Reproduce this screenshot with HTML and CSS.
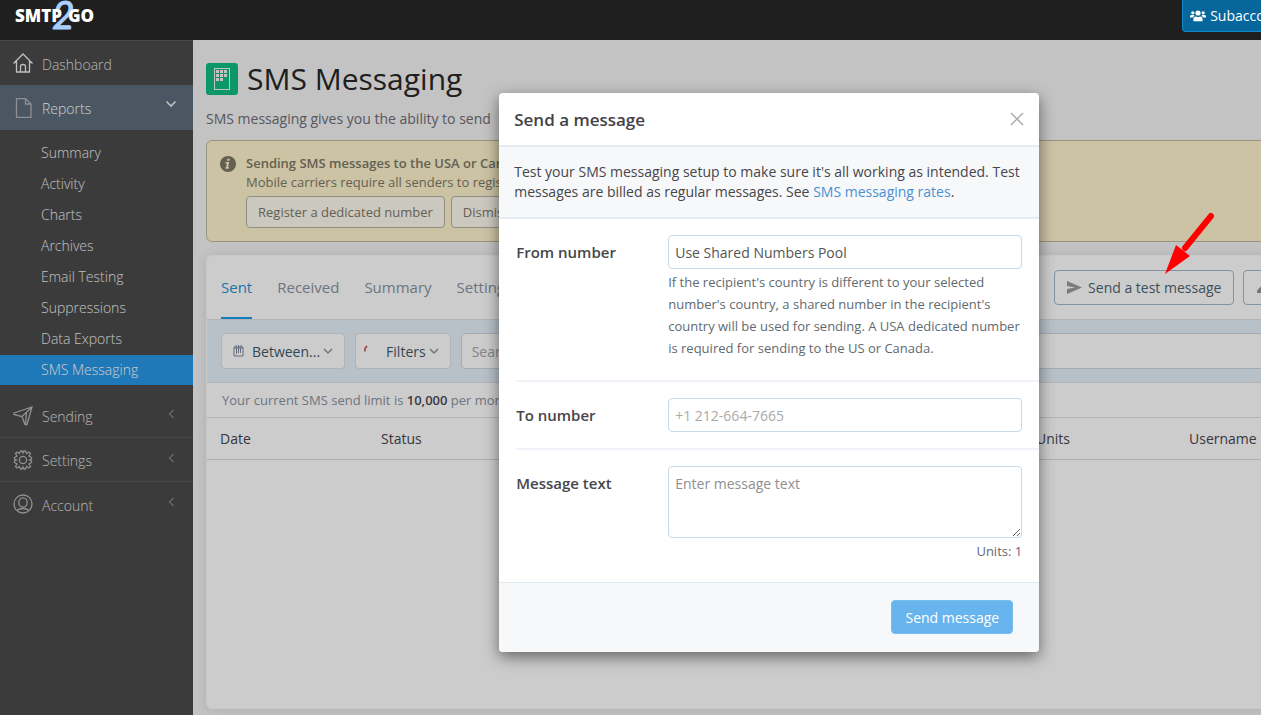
FILE: index.html
```html
<!DOCTYPE html>
<html lang="en">
<head>
    <meta charset="UTF-8">
    <meta name="viewport" content="width=device-width, initial-scale=1.0">
    <title>SMS Messaging</title>
    <link rel="stylesheet" href="styles.css">
</head>
<body>
    <div class="page">
        <header class="topbar">
            <a class="logo" href="#" aria-label="SMTP2GO">
                <svg width="84" height="34" viewBox="0 0 84 34">
                    <text class="logo-two" x="37" y="29">2</text>
                    <text class="logo-word" x="0" y="22">SMTP</text>
                    <text class="logo-word" x="53" y="22">GO</text>
                </svg>
            </a>
            <button type="button" class="subaccounts">
                <svg width="16" height="12" viewBox="0 0 16 12" fill="currentColor">
                    <circle cx="8" cy="3" r="2.6"/><circle cx="2.8" cy="2.8" r="1.6"/><circle cx="13.2" cy="2.8" r="1.6"/>
                    <path d="M3.4 11.3V9.4Q3.4 6.6 6 6.4q2 1 4 0 2.600.2 2.600 3v1.900zM0 7.600V6.400Q0 5 1.600 5h2.200l.8 1Q3 6.600 2.800 7.600zM16 7.600V6.400Q16 5 14.400 5h-2.200l-.8 1q1.600.6 1.800 1.600z"/>
                </svg>
                Subaccounts
            </button>
        </header>

        <div class="layout">
            <nav class="sidebar">
                <a class="nav-item bright" href="#">
                    <svg class="nav-icon" viewBox="0 0 20 20"><path d="M.5 10.500 10 1l9.500 9.500M3.500 8v11h4v-5.500q0-2 2.500-2t2.500 2V19h4V8M7.500 19h5"/></svg>
                    <span>Dashboard</span>
                </a>
                <a class="nav-item open" href="#">
                    <svg class="nav-icon" viewBox="0 0 20 20"><path d="M3.500.5h9l5.500 5.500v13.500H3.500zM12.500.5V6H18"/></svg>
                    <span>Reports</span>
                    <svg class="chevron" width="12" height="12" viewBox="0 0 12 12"><path d="M1.500 3.500 6 8l4.500-4.500"/></svg>
                </a>
                <ul class="subnav">
                    <li><a href="#">Summary</a></li>
                    <li><a href="#">Activity</a></li>
                    <li><a href="#">Charts</a></li>
                    <li><a href="#">Archives</a></li>
                    <li><a href="#">Email Testing</a></li>
                    <li><a href="#">Suppressions</a></li>
                    <li><a href="#">Data Exports</a></li>
                    <li><a class="active" href="#">SMS Messaging</a></li>
                </ul>
                <a class="nav-item" href="#">
                    <svg class="nav-icon" viewBox="0 0 20 20"><path d="M1 7 19 1l-5 17.500h-2l-3-8-8-2zM9 10.500 19 1M12.500 18l1-11"/></svg>
                    <span>Sending</span>
                    <svg class="chevron" width="12" height="12" viewBox="0 0 12 12"><path d="M8.500 2 4.500 6l4 4"/></svg>
                </a>
                <a class="nav-item" href="#">
                    <svg class="nav-icon" viewBox="0 0 20 20"><circle cx="10" cy="10" r="3.600"/><path d="M8 1h1l1 2 1-2h1.500l1 2.500 2.500-1.500 1.500 1.500-1.500 2.500L18.500 7.500V9l-2 1 2 1v1.500L16 14l1.500 2.500L16 18l-2.500-1.500-1 2.500H11l-1-2-1 2H7.500l-1-2.500L4 18l-1.500-1.500L4 14l-2.500-1.500V11l2-1-2-1V7.500L4 6 2.500 3.500 4 2l2.500 1.500L7.500 1z"/></svg>
                    <span>Settings</span>
                    <svg class="chevron" width="12" height="12" viewBox="0 0 12 12"><path d="M8.500 2 4.500 6l4 4"/></svg>
                </a>
                <a class="nav-item last" href="#">
                    <svg class="nav-icon" viewBox="0 0 20 20"><circle cx="10" cy="10" r="9"/><ellipse cx="10" cy="8.500" rx="4.200" ry="4.700"/><path d="M4 16.500q2.500-2 6-2t6 2"/></svg>
                    <span>Account</span>
                    <svg class="chevron" width="12" height="12" viewBox="0 0 12 12"><path d="M8.500 2 4.500 6l4 4"/></svg>
                </a>
            </nav>

            <main class="content">
                <div class="title">
                    <svg width="32" height="32" viewBox="0 0 32 32">
                        <rect width="32" height="32" rx="3" fill="#10bd82"/>
                        <rect x="8.500" y="5.500" width="15" height="21" fill="none" stroke="#f4f4f4"/>
                        <path d="M10 8.500h12M10 12.500h12M10 16.500h8" fill="none" stroke="#f4f4f4" stroke-width="3" stroke-dasharray="3 1"/>
                    </svg>
                    <h1>SMS Messaging</h1>
                </div>
                <p class="lead">SMS messaging gives you the ability to send</p>

                <section class="notice">
                    <svg width="16" height="16" viewBox="0 0 16 16"><circle cx="8" cy="8" r="8" fill="#7d7866"/><path d="M7.400 2.800h2.400l-.4 2H7zM5.700 6h3.500l-1.100 5h1l-.3 1.700H5.300l.3-1.500h.5l.8-3.600H5.400z" fill="#fef4ce"/></svg>
                    <div>
                        <strong>Sending SMS messages to the USA or Canada</strong>
                        <p>Mobile carriers require all senders to register</p>
                        <div class="notice-buttons">
                            <button type="button">Register a dedicated number</button>
                            <button type="button">Dismiss</button>
                        </div>
                    </div>
                </section>

                <section class="card">
                    <div class="tabs">
                        <a class="active" href="#">Sent</a>
                        <a href="#">Received</a>
                        <a href="#">Summary</a>
                        <a href="#">Settings</a>
                        <div class="actions">
                            <button type="button">
                                <svg width="15" height="13" viewBox="0 0 15 13"><path d="M0 0 15 6.500 0 13V8l8-1.500L0 5z" fill="#9c9c9c"/></svg>
                                Send a test message
                            </button>
                            <button type="button" class="wide" aria-label="Edit numbers">
                                <svg width="15" height="15" viewBox="0 0 15 15"><path d="m1 13 .5-3 9-9 3 3-9 9z" fill="#8a929c"/></svg>
                            </button>
                        </div>
                    </div>
                    <div class="filters">
                        <button type="button">
                            <svg width="11" height="12" viewBox="0 0 11 12"><path d="M1 2h9v9H1zM1 3h9M3.500 3v6M5.500 3v5M7.500 3v5M3 0v2M5.500 0v2M8 0v2" fill="none" stroke="#7e8799"/></svg>
                            <span>Between...</span>
                            <svg width="10" height="8" viewBox="0 0 10 8"><path d="m1 2 4 4 4-4" fill="none" stroke="#8695a2" stroke-width="1.500"/></svg>
                        </button>
                        <button type="button" class="filter-menu">
                            <svg width="11" height="12" viewBox="0 0 11 12"><path d="M4 1Q1.500 3 2 6.500" fill="none" stroke="#c66" stroke-width="1.800"/></svg>
                            <span>Filters</span>
                            <svg width="10" height="8" viewBox="0 0 10 8"><path d="m1 2 4 4 4-4" fill="none" stroke="#8695a2" stroke-width="1.500"/></svg>
                        </button>
                        <input type="search" placeholder="Search" aria-label="Search">
                    </div>
                    <p class="limit">Your current SMS send limit is <b>10,000</b> per month</p>
                    <table>
                        <thead>
                            <tr>
                                <th class="col-date">Date</th>
                                <th class="col-status">Status</th>
                                <th class="col-units">Units</th>
                                <th>Username</th>
                            </tr>
                        </thead>
                    </table>
                </section>
            </main>
        </div>

        <div class="backdrop">
            <form class="modal" role="dialog" aria-labelledby="modalTitle">
                <div class="modal-header">
                    <h2 id="modalTitle">Send a message</h2>
                    <button type="button" aria-label="Close">
                        <svg width="14" height="14" viewBox="0 0 14 14"><path d="m1 1 12 12M13 1 1 13" fill="none" stroke="#aaa" stroke-width="1.400"/></svg>
                    </button>
                </div>
                <p class="intro">Test your SMS messaging setup to make sure it's all working as intended. Test messages are billed as regular messages. See <a href="#">SMS messaging rates</a>.</p>
                <div class="fields">
                    <div class="field from">
                        <label for="from">From number</label>
                        <div>
                            <select id="from">
                                <option>Use Shared Numbers Pool</option>
                            </select>
                            <p class="help">If the recipient's country is different to your selected number's country, a shared number in the recipient's country will be used for sending. A USA dedicated number is required for sending to the US or Canada.</p>
                        </div>
                    </div>
                    <div class="field">
                        <label for="to">To number</label>
                        <div><input type="tel" id="to" placeholder="+1 212-664-7665"></div>
                    </div>
                    <div class="field message">
                        <label for="text">Message text</label>
                        <div>
                            <textarea id="text" placeholder="Enter message text"></textarea>
                            <p class="units">Units: 1</p>
                        </div>
                    </div>
                </div>
                <div class="modal-footer">
                    <button type="submit">Send message</button>
                </div>
            </form>
        </div>

        <svg class="arrow" width="50" height="64" viewBox="0 0 50 64">
            <path d="M46 5 20 37" fill="none" stroke="#f00" stroke-width="6" stroke-linecap="round"/>
            <path d="M0 63 11 34l14 11z" fill="#f00"/>
        </svg>
    </div>
</body>
</html>
```
FILE: styles.css
```css
* {
    box-sizing: border-box;
}
body {
    margin: 0;
    overflow: hidden;
    font-family: "Open Sans", "Noto Sans", sans-serif;
    font-size: 14px;
    color: #46464b;
}
h1, h2, p, ul {
    margin: 0;
    padding: 0;
}
a {
    text-decoration: none;
}
button, input, select, textarea {
    font: inherit;
}
button {
    cursor: pointer;
}

/* the workspace is wider than the window and runs off its right side */
.page {
    position: relative;
    display: flex;
    flex-direction: column;
    width: 122vw;
    min-height: 100vh;
    background: #f4f4f4;
}

/* top bar, stays above the backdrop */
.topbar {
    position: relative;
    z-index: 2;
    display: flex;
    justify-content: space-between;
    align-items: flex-start;
    height: 40px;
    padding: 0 237px 0 15px;
    background: #1f1f1f;
}
.logo-word {
    font-size: 17px;
    font-weight: 800;
    fill: #fff;
}
.logo-two {
    font-family: Lato, sans-serif;
    font-size: 39px;
    font-style: italic;
    font-weight: 400;
    fill: #a8cfff;
    stroke: #a8cfff;
    stroke-width: 1px;
}
.subaccounts {
    display: flex;
    align-items: center;
    gap: 4px;
    height: 32px;
    padding: 0 7px;
    border: 1px solid #0f8bcc;
    border-top: 0;
    border-radius: 0 0 4px 4px;
    background: #07679c;
    color: #fff;
}

/* sidebar */
.layout {
    display: flex;
    flex: 1;
}
.sidebar {
    flex: 0 0 193px;
    border-top: 1px solid #5e5e5e;
    background: #4a4a4a;
}
.nav-item {
    display: flex;
    align-items: center;
    gap: 9px;
    height: 44px;
    padding: 2px 16px 0 13px;
    border-bottom: 1px solid #5a5a5a;
    color: #e0e0e0;
    font-weight: 300;
}
.nav-item.bright,
.nav-item.last {
    border-bottom: 0;
}
.nav-item.bright .nav-icon {
    stroke: #f0f0f0;
}
.nav-item.open {
    height: 45px;
    border-bottom: 0;
    background: #5d6d7c;
    color: #fff;
}
.nav-icon {
    width: 20px;
    height: 20px;
    margin-bottom: 2px;
    fill: none;
    stroke: #b4b4b4;
    stroke-width: 1.3;
}
.chevron {
    margin: 0 0 6px auto;
    fill: none;
    stroke: #858585;
    stroke-width: 1.2;
}
.open .chevron {
    margin-bottom: 10px;
    stroke: #f0f0f0;
    stroke-width: 1.6;
}
.subnav {
    display: flex;
    flex-direction: column;
    gap: 1px;
    padding: 8px 0 9px;
    list-style: none;
}
.subnav a {
    display: block;
    padding-left: 41px;
    color: #f0f0f0;
    font-weight: 300;
    line-height: 30px;
}
.subnav .active {
    background: #2796e6;
    color: #fff;
}

/* main area */
.content {
    display: flex;
    flex: 1;
    flex-direction: column;
    padding: 18px 13px 6px;
}
.title {
    display: flex;
    align-items: center;
    gap: 9px;
}
h1 {
    color: #272727;
    font-size: 30px;
    font-weight: 500;
    line-height: 42px;
}
.lead {
    margin: 9px 0 11px;
    color: #6d6d76;
    line-height: 20px;
}
.notice {
    display: flex;
    gap: 10px;
    padding: 13px;
    border: 1px solid #beb99f;
    border-radius: 6px;
    background: #fef4ce;
    color: #7d7866;
    font-size: 13px;
    line-height: 19px;
}
.notice svg {
    margin-top: 2px;
}
.notice strong {
    font-weight: 600;
}
.notice-buttons {
    display: flex;
    gap: 6px;
    margin-top: 4px;
}
.notice-buttons button {
    height: 32px;
    padding: 0 11px;
    border: 1px solid #b6b2a4;
    border-radius: 4px;
    background: #fefaf0;
    color: #7d7866;
}
.card {
    flex: 1;
    margin-top: 13px;
    border: 1px solid #fafafa;
    border-radius: 6px;
    background: #fff;
    box-shadow: 0 1px 12px rgba(0, 0, 0, 0.1);
}
.tabs {
    display: flex;
    align-items: stretch;
    gap: 25px;
    height: 64px;
    padding: 0 14px;
    border-bottom: 1px solid #dce3ea;
}
.tabs > a {
    color: #8a93a0;
    font-size: 15px;
    line-height: 62px;
}
.tabs .active {
    border-bottom: 2px solid #159ee8;
    color: #2a93d6;
}
.actions {
    display: flex;
    align-items: center;
    gap: 9px;
    margin-left: auto;
}
.actions button {
    display: flex;
    align-items: center;
    gap: 6px;
    height: 35px;
    padding: 0 12px;
    border: 1px solid #a3b9ca;
    border-radius: 4px;
    background: #fff;
    color: #4c6675;
}
.actions .wide {
    width: 267px;
}
.filters {
    display: flex;
    gap: 10px;
    padding: 13px 14px;
    border-bottom: 1px solid #dce3ea;
    background: #e7f0fb;
}
.filters button {
    display: flex;
    align-items: center;
    gap: 8px;
    height: 36px;
    padding: 0 11px;
    border: 1px solid #dcdfe2;
    border-radius: 4px;
    background: #fff;
    color: #3f5a69;
}
.filters button span {
    margin-right: -5px;
}
.filters .filter-menu {
    padding-left: 7px;
    gap: 12px;
}
.filters .filter-menu span {
    margin-right: -9px;
}
.filters input {
    flex: 1;
    height: 36px;
    padding: 0 10px;
    border: 1px solid #ccd8e4;
    border-radius: 4px;
    background: #fff;
}
.filters input::placeholder {
    color: #a5a5a5;
}
.limit {
    padding: 0 15px;
    border-bottom: 1px solid #dce3ea;
    color: #8a93a0;
    font-size: 13px;
    line-height: 34px;
}
.limit b {
    color: #4a4a52;
    font-weight: 600;
}
table {
    width: 100%;
    border-collapse: collapse;
    table-layout: fixed;
}
th {
    height: 41px;
    padding: 0 13px;
    border-bottom: 1px solid #dadada;
    color: #46464f;
    font-weight: 500;
    text-align: left;
}
.col-date {
    width: 161px;
}
.col-status {
    width: 655px;
}
.col-units {
    width: 153px;
}

/* dialog */
.backdrop {
    position: absolute;
    inset: 0;
    display: flex;
    justify-content: center;
    align-items: flex-start;
    padding-top: 93px;
    background: rgba(0, 0, 0, 0.2);
}
.modal {
    width: 540px;
    border-radius: 4px;
    background: #fff;
    box-shadow: 0 5px 15px rgba(0, 0, 0, 0.5);
}
.modal-header {
    display: flex;
    justify-content: space-between;
    align-items: center;
    height: 54px;
    padding: 0 15px;
    border-bottom: 2px solid #e5edf3;
}
.modal-header h2 {
    color: #424247;
    font-size: 17px;
    font-weight: 600;
}
.modal-header button {
    display: flex;
    padding: 0;
    border: 0;
    background: none;
}
.intro {
    padding: 15px;
    border-bottom: 2px solid #e5edf3;
    background: #f7f8fa;
    line-height: 20px;
}
.intro a {
    color: #4a90d2;
}
.fields {
    padding-left: 17px;
}
.field {
    display: flex;
    padding: 16px 17px 16px 0;
    border-bottom: 2px solid #eff3f9;
}
.field.from {
    padding-bottom: 21px;
}
.field.message {
    padding-bottom: 20px;
    border-bottom: 0;
}
.field label {
    flex: 0 0 152px;
    font-size: 15px;
    font-weight: 600;
    line-height: 34px;
}
.field > div {
    flex: 1;
}
.field input,
.field select,
.field textarea {
    display: block;
    width: 100%;
    height: 34px;
    padding: 0 6px;
    border: 1px solid #c9d9e6;
    border-radius: 4px;
    background: #fff;
    color: #555;
    appearance: none;
}
.field textarea {
    height: 72px;
    padding: 7px 6px;
    resize: vertical;
}
.field input::placeholder {
    color: #aaa;
}
.field textarea::placeholder {
    color: #8f8f8f;
}
.help,
.units {
    margin-top: 2px;
    color: #5f6a70;
    font-size: 13px;
    line-height: 22px;
}
.units {
    text-align: right;
}
.modal-footer {
    display: flex;
    justify-content: flex-end;
    padding: 17px 26px 18px;
    border-top: 1px solid #dfeaf0;
    border-radius: 0 0 4px 4px;
    background: #f7f8fa;
}
.modal-footer button {
    height: 34px;
    padding: 0 13px;
    border: 1px solid #77bdf0;
    border-radius: 4px;
    background: #67b4ee;
    color: #fff;
}

/* pointer drawn over the page */
.arrow {
    position: absolute;
    top: 211px;
    left: 1165px;
}
```
